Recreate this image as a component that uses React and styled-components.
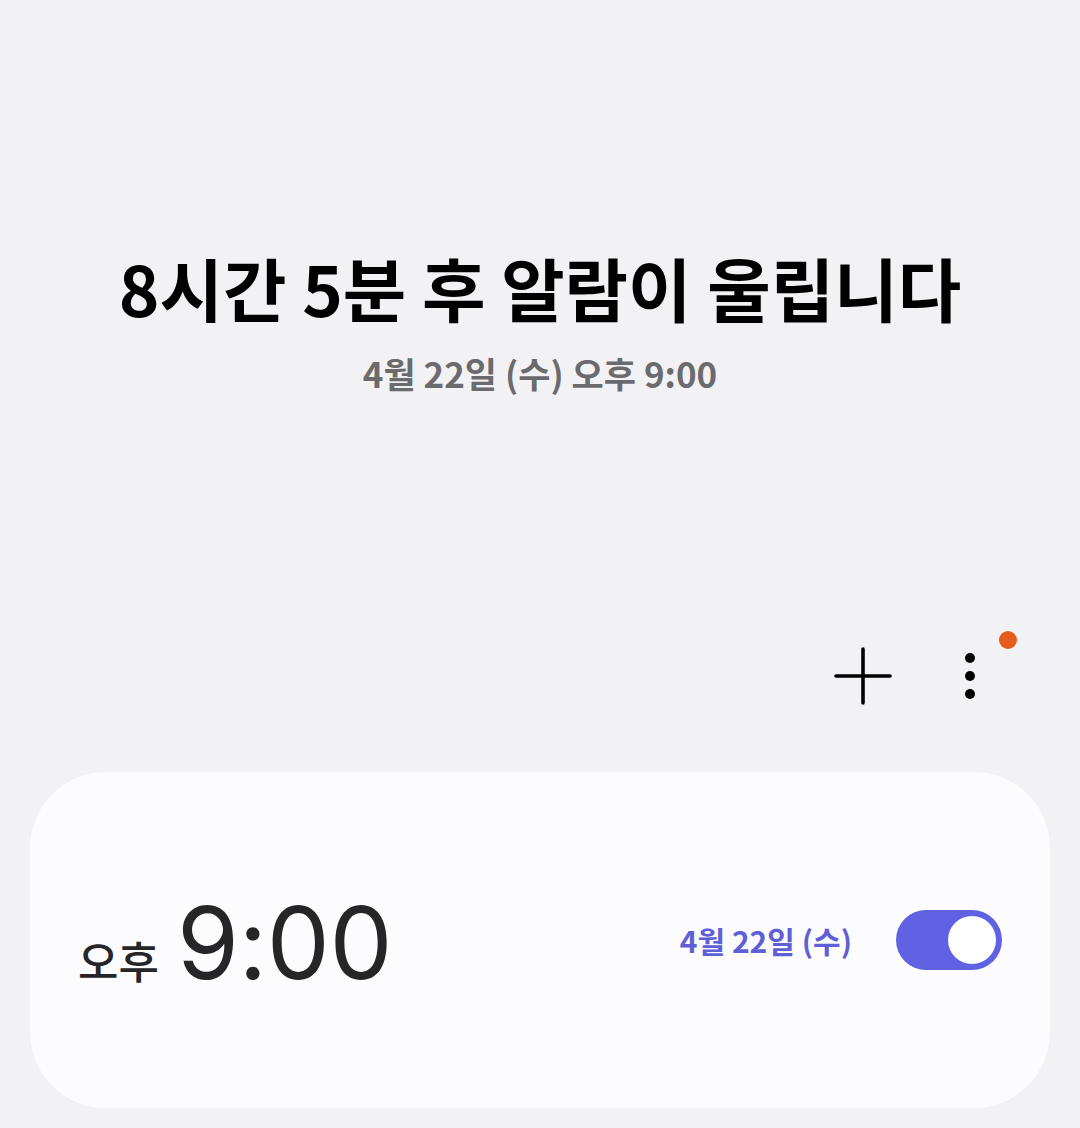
import styled, { createGlobalStyle } from 'styled-components'

const GlobalStyle = createGlobalStyle`
    html, body {
        margin: 0;
        padding: 0;
        background-color: #f2f2f4;
    }

    * {
        box-sizing: border-box;
    }
`

const Screen = styled.main`
    width: 1080px;
    height: 1128px;
    overflow: hidden;
    display: flex;
    flex-direction: column;
    font-family: "Noto Sans CJK KR", "Noto Sans", sans-serif;
`

const Summary = styled.section`
    display: flex;
    flex-direction: column;
    align-items: center;
    padding-top: 242px;
    gap: 19px;
`

const Title = styled.h1`
    margin: 0;
    font-size: 69px;
    font-weight: 700;
    line-height: 90px;
    color: #000;
    letter-spacing: 0;
`

const SubTitle = styled.p`
    margin: 0;
    font-size: 35px;
    font-weight: 700;
    line-height: 44px;
    color: #6b6b6e;
`

const Toolbar = styled.div`
    display: flex;
    justify-content: flex-end;
    align-items: center;
    gap: 71px;
    padding: 0 104px 0 0;
    margin-top: 231px;
    height: 100px;
`

const IconButton = styled.button`
    all: unset;
    position: relative;
    display: flex;
    align-items: center;
    justify-content: center;
    width: ${p => p.$w}px;
    height: 60px;
`

const Badge = styled.span`
    position: absolute;
    top: -15px;
    right: -41px;
    width: 18px;
    height: 18px;
    border-radius: 50%;
    background-color: #e65c1e;
`

const Card = styled.article`
    margin: 46px 30px 0;
    height: 336px;
    border-radius: 76px;
    background-color: #fcfcfe;
    display: flex;
    align-items: center;
    justify-content: space-between;
    padding: 0 48px 0 48px;
`

const TimeGroup = styled.div`
    display: flex;
    align-items: baseline;
    gap: 18px;
    margin-top: 4px;
`

const Meridiem = styled.span`
    font-size: 44px;
    font-weight: 500;
    color: #262628;
`

const Time = styled.span`
    font-family: Inter, Roboto, sans-serif;
    font-size: 100px;
    font-weight: 400;
    color: #262628;
    letter-spacing: -0.5px;
`

const Side = styled.div`
    display: flex;
    align-items: center;
    gap: 44px;
`

const DateLabel = styled.span`
    font-size: 30px;
    font-weight: 700;
    color: #5f5fd8;
`

const Switch = styled.div`
    width: 106px;
    height: 60px;
    border-radius: 30px;
    background-color: #6161e3;
    display: flex;
    align-items: center;
    justify-content: flex-end;
    padding: 0 6px;
`

const Knob = styled.span`
    width: 48px;
    height: 48px;
    border-radius: 50%;
    background-color: #fff;
`

export default function App() {
    return (
        <>
            <GlobalStyle />
            <Screen>
                <Summary>
                    <Title>8시간 5분 후 알람이 울립니다</Title>
                    <SubTitle>4월 22일 (수) 오후 9:00</SubTitle>
                </Summary>

                <Toolbar>
                    <IconButton $w={60} aria-label='알람 추가'>
                        <svg width='60' height='60' viewBox='0 0 60 60'>
                            <path d='M30 3 V57 M3 30 H57' stroke='#000' strokeWidth='3.6' strokeLinecap='round' fill='none' />
                        </svg>
                    </IconButton>
                    <IconButton $w={12} aria-label='더보기'>
                        <svg width='12' height='60' viewBox='0 0 12 60'>
                            <circle cx='6' cy='12' r='5' fill='#000' />
                            <circle cx='6' cy='30' r='5' fill='#000' />
                            <circle cx='6' cy='48' r='5' fill='#000' />
                        </svg>
                        <Badge />
                    </IconButton>
                </Toolbar>

                <Card>
                    <TimeGroup>
                        <Meridiem>오후</Meridiem>
                        <Time>9:00</Time>
                    </TimeGroup>
                    <Side>
                        <DateLabel>4월 22일 (수)</DateLabel>
                        <Switch>
                            <Knob />
                        </Switch>
                    </Side>
                </Card>
            </Screen>
        </>
    )
}
